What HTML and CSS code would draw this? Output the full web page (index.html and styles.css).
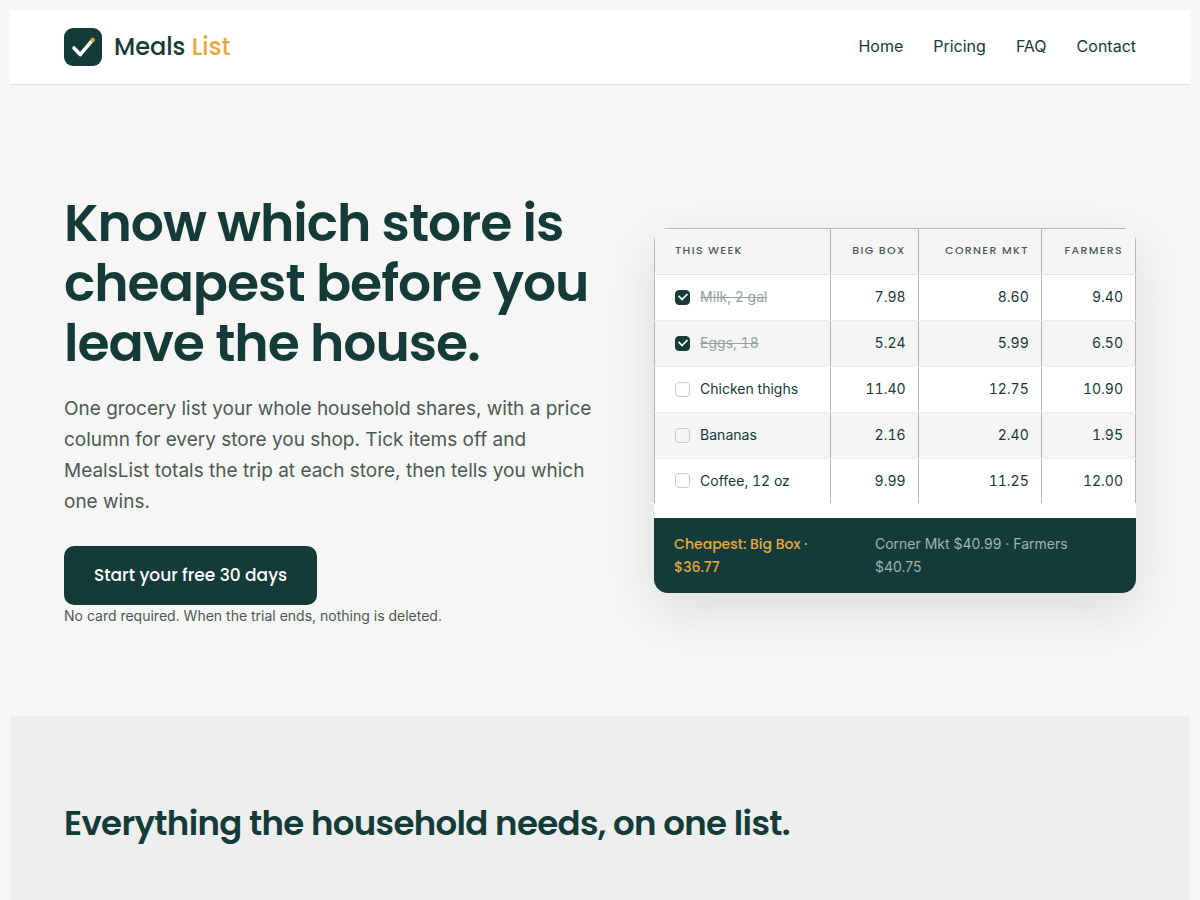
FILE: index.html
```html
<!DOCTYPE html>
<html lang="en">
  <head>
    <meta charset="UTF-8" />
    <meta name="viewport" content="width=device-width, initial-scale=1.0" />
    <title>Meals List</title>
    <link rel="stylesheet" href="styles.css">
  </head>
  <body>
    <header class="site-header">
      <a class="brand" href="#">
        <svg class="brand-mark" viewBox="0 0 38 38" aria-hidden="true">
          <rect width="38" height="38" rx="9" fill="#143b39" />
          <path d="M10 20l6.2 6.6L27.2 13.6" fill="none" stroke="#fff" stroke-width="3.6" stroke-linecap="round" stroke-linejoin="round" />
          <circle cx="28.7" cy="12" r="2.2" fill="#e8a93c" />
        </svg>
        <span class="brand-name">Meals <span class="accent">List</span></span>
      </a>
      <nav class="site-nav">
        <a href="#">Home</a>
        <a href="#">Pricing</a>
        <a href="#">FAQ</a>
        <a href="#">Contact</a>
      </nav>
    </header>

    <main>
      <section class="hero">
        <div class="hero-copy">
          <h1>Know which store is cheapest before you leave the house.</h1>
          <p class="lead">One grocery list your whole household shares, with a price column for every store you shop. Tick items off and MealsList totals the trip at each store, then tells you which one wins.</p>
          <a class="cta" href="#">Start your free 30 days</a>
          <p class="note">No card required. When the trial ends, nothing is deleted.</p>
        </div>

        <div class="list-card">
          <table class="price-table">
            <thead>
              <tr>
                <th class="col-item" scope="col">This week</th>
                <th class="col-box" scope="col">Big Box</th>
                <th class="col-corner" scope="col">Corner Mkt</th>
                <th class="col-farm" scope="col">Farmers</th>
              </tr>
            </thead>
            <tbody>
              <tr>
                <td><label class="item"><input type="checkbox" checked /><span>Milk, 2 gal</span></label></td>
                <td>7.98</td>
                <td>8.60</td>
                <td>9.40</td>
              </tr>
              <tr>
                <td><label class="item"><input type="checkbox" checked /><span>Eggs, 18</span></label></td>
                <td>5.24</td>
                <td>5.99</td>
                <td>6.50</td>
              </tr>
              <tr>
                <td><label class="item"><input type="checkbox" /><span>Chicken thighs</span></label></td>
                <td>11.40</td>
                <td>12.75</td>
                <td>10.90</td>
              </tr>
              <tr>
                <td><label class="item"><input type="checkbox" /><span>Bananas</span></label></td>
                <td>2.16</td>
                <td>2.40</td>
                <td>1.95</td>
              </tr>
              <tr>
                <td><label class="item"><input type="checkbox" /><span>Coffee, 12 oz</span></label></td>
                <td>9.99</td>
                <td>11.25</td>
                <td>12.00</td>
              </tr>
            </tbody>
          </table>
          <div class="totals">
            <strong>Cheapest: Big Box · $36.77</strong>
            <span>Corner Mkt $40.99 · Farmers $40.75</span>
          </div>
        </div>
      </section>

      <section class="features">
        <h2>Everything the household needs, on one list.</h2>
      </section>
    </main>
  </body>
</html>
```
FILE: styles.css
```css
:root {
  --ink: #143b39;
  --muted: #4a5b55;
  --amber: #e8a93c;
  --paper: #f6f6f4;
  --display: Poppins, Inter, sans-serif;
}

* {
  box-sizing: border-box;
}

body {
  margin: 0;
  padding: 10px;
  font-family: Inter, "Liberation Sans", sans-serif;
  font-size: 16px;
  line-height: 1.6;
  color: var(--ink);
  background: var(--paper);
}

a {
  color: inherit;
  text-decoration: none;
}

.site-header {
  display: flex;
  justify-content: space-between;
  align-items: center;
  padding: 18px 54px;
  background: #fff;
  border-bottom: 1px solid #dfe3e2;
}

.brand {
  display: flex;
  align-items: center;
  gap: 12px;
  font-family: var(--display);
  font-size: 24px;
  font-weight: 500;
  line-height: 38px;
}

.brand-mark {
  width: 38px;
  height: 38px;
}

.accent {
  color: var(--amber);
}

.site-nav {
  display: flex;
  gap: 30px;
}

.hero {
  display: grid;
  grid-template-columns: 1.1fr 1fr;
  gap: 60px;
  align-items: center;
  padding: 108px 54px 88px;
}

h1 {
  margin: 0 0 20px;
  font-family: var(--display);
  font-size: 52px;
  font-weight: 600;
  line-height: 60px;
  letter-spacing: -0.02em;
}

.lead {
  margin: 0 0 29px;
  font-size: 19px;
  line-height: 31px;
  color: var(--muted);
}

.cta {
  display: table;
  padding: 16px 30px;
  border-radius: 10px;
  background: var(--ink);
  color: #fff;
  font-family: var(--display);
  font-size: 17px;
  font-weight: 500;
}

.note {
  margin: 0;
  font-size: 14px;
  color: var(--muted);
}

.list-card {
  overflow: hidden;
  border-radius: 14px;
  background: #fff;
  box-shadow: 0 18px 50px rgba(20, 59, 57, 0.12);
}

.price-table {
  width: 100%;
  margin-bottom: 15px;
  border-collapse: collapse;
  table-layout: fixed;
  font-size: 14px;
}

.price-table th,
.price-table td {
  height: 46px;
  padding: 0 12px;
  border: 1px solid #b4b8b7;
  border-bottom-color: #ebedec;
  text-align: right;
  font-variant-numeric: tabular-nums;
}

.price-table td {
  border-top-color: #ebedec;
}

.price-table tr > :first-child {
  padding-left: 20px;
  text-align: left;
}

.price-table th {
  border-bottom-color: #dfe3e2;
  font-family: var(--display);
  font-size: 11px;
  font-weight: 500;
  letter-spacing: 0.12em;
  text-transform: uppercase;
  color: var(--muted);
}

.price-table thead,
.price-table tbody tr:nth-child(even) {
  background: #f5f5f5;
}

.price-table tbody tr:last-child td {
  height: 45px;
  border-bottom: none;
}

.col-item {
  width: 36.5%;
}

.col-box {
  width: 18.3%;
}

.col-corner {
  width: 25.6%;
}

.item {
  display: flex;
  align-items: center;
  gap: 10px;
}

.item input {
  appearance: none;
  width: 15px;
  height: 15px;
  margin: 0;
  border: 1px solid #c3cdca;
  border-radius: 4px;
}

.item input:checked {
  display: grid;
  place-items: center;
  border-color: var(--ink);
  background: var(--ink);
}

.item input:checked::before {
  content: "";
  width: 8px;
  height: 5px;
  margin-bottom: 3px;
  border-left: 2px solid #fff;
  border-bottom: 2px solid #fff;
  transform: rotate(-45deg) scale(0.85);
}

.item input:checked + span {
  color: #93a39e;
  text-decoration: line-through;
}

.totals {
  display: grid;
  grid-template-columns: 3fr 4fr;
  gap: 20px;
  padding: 15px 20px;
  background: var(--ink);
  color: #9db5af;
  font-size: 14px;
}

.totals strong {
  color: var(--amber);
  font-family: var(--display);
  font-weight: 500;
}

.features {
  min-height: 320px;
  padding: 80px 54px;
  background: #edefee;
}

h2 {
  margin: 0;
  font-family: var(--display);
  font-size: 34px;
  font-weight: 600;
  letter-spacing: -0.02em;
}
```
